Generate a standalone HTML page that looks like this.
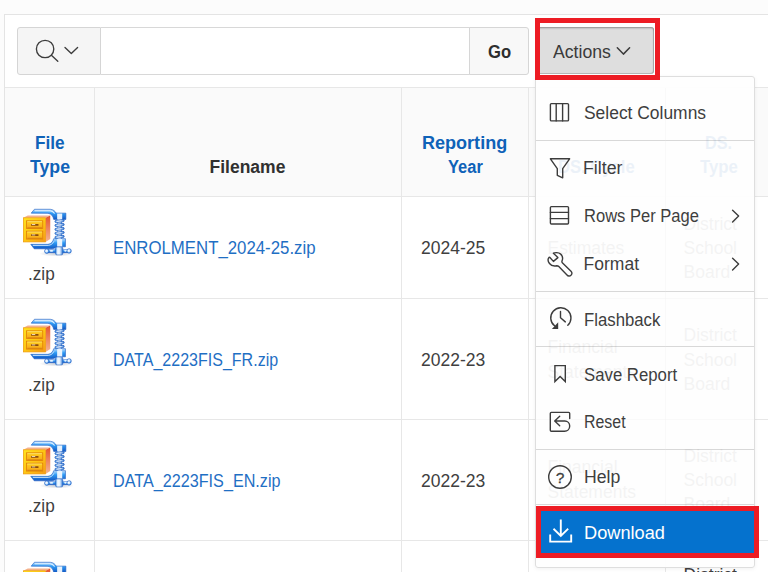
<!DOCTYPE html>
<html lang="en">
<head>
<meta charset="utf-8">
<title>Interactive Report - Actions - Download</title>
<style>
html,body{margin:0;padding:0;}
body{width:768px;height:572px;overflow:hidden;position:relative;background:#fcfcfc;font-family:"Liberation Sans",Arial,sans-serif;font-size:17.5px;color:#404040;}
.abs{position:absolute;}
.t{position:absolute;white-space:nowrap;line-height:20px;height:20px;transform-origin:0 50%;}
.b{font-weight:bold;}
.blue{color:#0f62b8;}
.link{color:#1f6fc4;}
.hl{position:absolute;background:#e7e7e7;height:1px;}
.vl{position:absolute;background:#e7e7e7;width:1px;}
#region{left:4px;top:14px;width:780px;height:600px;background:#fff;border:1px solid #e4e4e4;box-sizing:border-box;}
#thead{left:5px;top:87px;width:763px;height:110px;background:#fafafa;border-top:1px solid #e7e7e7;border-bottom:1px solid #e7e7e7;box-sizing:border-box;}
#sbtn{left:17px;top:27px;width:84px;height:48px;box-sizing:border-box;background:#f5f5f5;border:1px solid #d5d5d5;border-radius:3px 0 0 3px;}
#sinp{left:101px;top:27px;width:369px;height:48px;box-sizing:border-box;background:#fff;border:1px solid #d8d8d8;border-left:none;border-right:none;}
#go{left:469px;top:27px;width:60px;height:48px;box-sizing:border-box;background:#f8f8f8;border:1px solid #d6d6d6;border-radius:0 3px 3px 0;}
#act{left:537px;top:27px;width:117px;height:47px;box-sizing:border-box;background:#dedede;border-radius:3px;box-shadow:inset 0 1px 2px rgba(0,0,0,.38), inset -1px -1px 0 rgba(0,0,0,.16);}
.red{position:absolute;box-sizing:border-box;border:5px solid #ed1c24;}
#menu{left:535px;top:76px;width:220px;height:492px;box-sizing:border-box;background:rgba(254,254,254,.93);border:1px solid #dedede;border-radius:3px;box-shadow:0 1px 4px rgba(0,0,0,.06);}
.sep{position:absolute;left:536px;width:218px;height:1px;background:#d8d8d8;}
.mi{color:#3e3e3e;}
svg{position:absolute;overflow:visible;}
.ic{fill:none;stroke:#3c3c3c;stroke-width:1.5;stroke-linecap:round;stroke-linejoin:round;}
.gh{opacity:.075;}
.gl{opacity:.05;}
</style>
</head>
<body>
<div id="region" class="abs"></div>
<div id="thead" class="abs"></div>
<!-- toolbar -->
<div id="sbtn" class="abs"></div>
<div id="sinp" class="abs"></div>
<div id="go" class="abs"></div>
<div id="t_go" class="t b" style="transform:scaleX(0.9500);left:487.60px;top:41.7px;color:#2e2e2e;">Go</div>
<div id="act" class="abs"></div>
<div id="t_act" class="t" style="transform:scaleX(1.0088);left:553.40px;top:41.7px;color:#3a3a3a;">Actions</div>

<!-- search icon + chevrons -->
<svg class="ic" style="left:0;top:0" width="768" height="100" viewBox="0 0 768 100">
<circle cx="45.1" cy="49" r="8.7" style="stroke-width:1.35"/>
<path d="M51.4 55.2 L57.8 61.2" style="stroke-width:1.35"/>
<path d="M65 47.4 L71.3 53.5 L77.6 47.4" style="stroke-width:1.35"/>
<path d="M617.3 47.8 L623.4 54.1 L629.6 47.8" style="stroke:#3a3a3a"/>
</svg>
<!-- table grid -->
<div class="vl" style="left:94px;top:88px;height:484px;"></div>
<div class="vl" style="left:401px;top:88px;height:484px;"></div>
<div class="vl" style="left:528px;top:88px;height:484px;"></div>
<div class="vl" style="left:665px;top:88px;height:484px;"></div>
<div class="hl" style="left:5px;top:298px;width:763px;"></div>
<div class="hl" style="left:5px;top:419px;width:763px;"></div>
<div class="hl" style="left:5px;top:540px;width:763px;"></div>
<!-- ICONS-START -->
<svg style="left:18px;top:204px" width="58" height="58" viewBox="0 0 572 572">
<defs>
<linearGradient id="z1a" x1="0" y1="0" x2="1" y2="1"><stop offset="0" stop-color="#ffe21f"/><stop offset=".55" stop-color="#fdc413"/><stop offset="1" stop-color="#f59a1b"/></linearGradient>
<linearGradient id="z1b" x1="0" y1="0" x2="0" y2="1"><stop offset="0" stop-color="#e5532c"/><stop offset="1" stop-color="#f6b692"/></linearGradient>
<linearGradient id="z1c" x1="0" y1="0" x2="0" y2="1"><stop offset="0" stop-color="#bfe2ff"/><stop offset=".4" stop-color="#2f9bf5"/><stop offset="1" stop-color="#1258c4"/></linearGradient>
<linearGradient id="z1d" x1="0" y1="0" x2="1" y2="0"><stop offset="0" stop-color="#3b8fe6"/><stop offset=".3" stop-color="#f4faff"/><stop offset=".6" stop-color="#e2f1ff"/><stop offset="1" stop-color="#2a74d2"/></linearGradient>
<linearGradient id="z1e" x1="0" y1="0" x2="0" y2="1"><stop offset="0" stop-color="#ffd21c"/><stop offset="1" stop-color="#f7a41c"/></linearGradient>
<radialGradient id="z1f" cx=".4" cy=".4" r=".6"><stop offset="0" stop-color="#ffffff"/><stop offset=".5" stop-color="#cfe8ff"/><stop offset="1" stop-color="#2f86e6"/></radialGradient>
<radialGradient id="z1s" cx=".5" cy=".5" r=".5"><stop offset="0" stop-color="#7a8aa0" stop-opacity=".45"/><stop offset="1" stop-color="#7a8aa0" stop-opacity="0"/></radialGradient>
</defs>
<ellipse cx="380" cy="490" rx="170" ry="28" fill="url(#z1s)"/>
<!-- clamp arms -->
<path d="M130 90L162 52H318C352 54 366 74 378 90H472V152H352C346 120 330 96 296 92Z" fill="url(#z1c)" stroke="#1f5cc0" stroke-width="6" stroke-linejoin="round"/>
<path d="M170 66H316C338 68 350 80 358 92" fill="none" stroke="#e4f2ff" stroke-width="10" stroke-linecap="round"/>
<path d="M126 398H296C330 392 344 372 352 342H468V422H382C366 438 348 442 318 442H160Z" fill="url(#z1c)" stroke="#1f5cc0" stroke-width="6" stroke-linejoin="round"/>
<path d="M150 408H300C326 404 342 392 352 372" fill="none" stroke="#d8ecff" stroke-width="9" stroke-linecap="round"/>
<!-- screw -->
<rect x="386" y="150" width="48" height="195" fill="url(#z1d)"/>
<rect x="364" y="157" width="92" height="22" rx="11" fill="url(#z1d)" stroke="#1f5cc0" stroke-width="7" transform="rotate(-7 410 168)"/><rect x="364" y="196" width="92" height="22" rx="11" fill="url(#z1d)" stroke="#1f5cc0" stroke-width="7" transform="rotate(-7 410 207)"/><rect x="364" y="235" width="92" height="22" rx="11" fill="url(#z1d)" stroke="#1f5cc0" stroke-width="7" transform="rotate(-7 410 246)"/><rect x="364" y="274" width="92" height="22" rx="11" fill="url(#z1d)" stroke="#1f5cc0" stroke-width="7" transform="rotate(-7 410 285)"/><rect x="364" y="313" width="92" height="22" rx="11" fill="url(#z1d)" stroke="#1f5cc0" stroke-width="7" transform="rotate(-7 410 324)"/>
<rect x="386" y="94" width="50" height="56" fill="#f2f9ff" opacity=".95"/>
<rect x="386" y="346" width="50" height="74" fill="#f2f9ff" opacity=".95"/>
<!-- T handle -->
<rect x="280" y="450" width="232" height="30" rx="15" fill="url(#z1c)" stroke="#1f5cc0" stroke-width="5"/>
<circle cx="284" cy="465" r="22" fill="url(#z1f)" stroke="#1f5cc0" stroke-width="6"/>
<circle cx="504" cy="463" r="22" fill="url(#z1f)" stroke="#1f5cc0" stroke-width="6"/>
<rect x="370" y="424" width="72" height="78" rx="14" fill="url(#z1d)" stroke="#1f5cc0" stroke-width="5"/>
<ellipse cx="330" cy="462" rx="20" ry="9" fill="#eef7ff"/>
<ellipse cx="468" cy="462" rx="14" ry="8" fill="#eef7ff"/>
<!-- cabinet -->
<path d="M52 136L96 114H318L272 136Z" fill="#f4b18b"/>
<path d="M272 136L318 114V346L272 374Z" fill="url(#z1b)"/>
<rect x="53" y="136" width="219" height="238" fill="url(#z1a)" stroke="#ee9a0a" stroke-width="7"/>
<rect x="84" y="166" width="160" height="76" fill="url(#z1e)" stroke="#e07f0a" stroke-width="8"/>
<rect x="84" y="268" width="160" height="78" fill="url(#z1e)" stroke="#e07f0a" stroke-width="8"/>
<path d="M92 234H236M92 338H236" stroke="#b85a00" stroke-width="6" opacity=".7"/>
<path d="M92 174H236M92 276H236" stroke="#fff3a6" stroke-width="6" opacity=".9"/>
<rect x="128" y="197" width="74" height="17" rx="3" fill="#8a4a0c"/><rect x="136" y="199" width="34" height="8" fill="#fff6d8"/>
<rect x="128" y="299" width="74" height="17" rx="3" fill="#8a4a0c"/><rect x="136" y="301" width="34" height="8" fill="#fff6d8"/>
</svg>
<svg style="left:18px;top:314.3px" width="58" height="58" viewBox="0 0 572 572">
<defs>
<linearGradient id="z2a" x1="0" y1="0" x2="1" y2="1"><stop offset="0" stop-color="#ffe21f"/><stop offset=".55" stop-color="#fdc413"/><stop offset="1" stop-color="#f59a1b"/></linearGradient>
<linearGradient id="z2b" x1="0" y1="0" x2="0" y2="1"><stop offset="0" stop-color="#e5532c"/><stop offset="1" stop-color="#f6b692"/></linearGradient>
<linearGradient id="z2c" x1="0" y1="0" x2="0" y2="1"><stop offset="0" stop-color="#bfe2ff"/><stop offset=".4" stop-color="#2f9bf5"/><stop offset="1" stop-color="#1258c4"/></linearGradient>
<linearGradient id="z2d" x1="0" y1="0" x2="1" y2="0"><stop offset="0" stop-color="#3b8fe6"/><stop offset=".3" stop-color="#f4faff"/><stop offset=".6" stop-color="#e2f1ff"/><stop offset="1" stop-color="#2a74d2"/></linearGradient>
<linearGradient id="z2e" x1="0" y1="0" x2="0" y2="1"><stop offset="0" stop-color="#ffd21c"/><stop offset="1" stop-color="#f7a41c"/></linearGradient>
<radialGradient id="z2f" cx=".4" cy=".4" r=".6"><stop offset="0" stop-color="#ffffff"/><stop offset=".5" stop-color="#cfe8ff"/><stop offset="1" stop-color="#2f86e6"/></radialGradient>
<radialGradient id="z2s" cx=".5" cy=".5" r=".5"><stop offset="0" stop-color="#7a8aa0" stop-opacity=".45"/><stop offset="1" stop-color="#7a8aa0" stop-opacity="0"/></radialGradient>
</defs>
<ellipse cx="380" cy="490" rx="170" ry="28" fill="url(#z2s)"/>
<!-- clamp arms -->
<path d="M130 90L162 52H318C352 54 366 74 378 90H472V152H352C346 120 330 96 296 92Z" fill="url(#z2c)" stroke="#1f5cc0" stroke-width="6" stroke-linejoin="round"/>
<path d="M170 66H316C338 68 350 80 358 92" fill="none" stroke="#e4f2ff" stroke-width="10" stroke-linecap="round"/>
<path d="M126 398H296C330 392 344 372 352 342H468V422H382C366 438 348 442 318 442H160Z" fill="url(#z2c)" stroke="#1f5cc0" stroke-width="6" stroke-linejoin="round"/>
<path d="M150 408H300C326 404 342 392 352 372" fill="none" stroke="#d8ecff" stroke-width="9" stroke-linecap="round"/>
<!-- screw -->
<rect x="386" y="150" width="48" height="195" fill="url(#z2d)"/>
<rect x="364" y="157" width="92" height="22" rx="11" fill="url(#z2d)" stroke="#1f5cc0" stroke-width="7" transform="rotate(-7 410 168)"/><rect x="364" y="196" width="92" height="22" rx="11" fill="url(#z2d)" stroke="#1f5cc0" stroke-width="7" transform="rotate(-7 410 207)"/><rect x="364" y="235" width="92" height="22" rx="11" fill="url(#z2d)" stroke="#1f5cc0" stroke-width="7" transform="rotate(-7 410 246)"/><rect x="364" y="274" width="92" height="22" rx="11" fill="url(#z2d)" stroke="#1f5cc0" stroke-width="7" transform="rotate(-7 410 285)"/><rect x="364" y="313" width="92" height="22" rx="11" fill="url(#z2d)" stroke="#1f5cc0" stroke-width="7" transform="rotate(-7 410 324)"/>
<rect x="386" y="94" width="50" height="56" fill="#f2f9ff" opacity=".95"/>
<rect x="386" y="346" width="50" height="74" fill="#f2f9ff" opacity=".95"/>
<!-- T handle -->
<rect x="280" y="450" width="232" height="30" rx="15" fill="url(#z2c)" stroke="#1f5cc0" stroke-width="5"/>
<circle cx="284" cy="465" r="22" fill="url(#z2f)" stroke="#1f5cc0" stroke-width="6"/>
<circle cx="504" cy="463" r="22" fill="url(#z2f)" stroke="#1f5cc0" stroke-width="6"/>
<rect x="370" y="424" width="72" height="78" rx="14" fill="url(#z2d)" stroke="#1f5cc0" stroke-width="5"/>
<ellipse cx="330" cy="462" rx="20" ry="9" fill="#eef7ff"/>
<ellipse cx="468" cy="462" rx="14" ry="8" fill="#eef7ff"/>
<!-- cabinet -->
<path d="M52 136L96 114H318L272 136Z" fill="#f4b18b"/>
<path d="M272 136L318 114V346L272 374Z" fill="url(#z2b)"/>
<rect x="53" y="136" width="219" height="238" fill="url(#z2a)" stroke="#ee9a0a" stroke-width="7"/>
<rect x="84" y="166" width="160" height="76" fill="url(#z2e)" stroke="#e07f0a" stroke-width="8"/>
<rect x="84" y="268" width="160" height="78" fill="url(#z2e)" stroke="#e07f0a" stroke-width="8"/>
<path d="M92 234H236M92 338H236" stroke="#b85a00" stroke-width="6" opacity=".7"/>
<path d="M92 174H236M92 276H236" stroke="#fff3a6" stroke-width="6" opacity=".9"/>
<rect x="128" y="197" width="74" height="17" rx="3" fill="#8a4a0c"/><rect x="136" y="199" width="34" height="8" fill="#fff6d8"/>
<rect x="128" y="299" width="74" height="17" rx="3" fill="#8a4a0c"/><rect x="136" y="301" width="34" height="8" fill="#fff6d8"/>
</svg>
<svg style="left:18px;top:435.6px" width="58" height="58" viewBox="0 0 572 572">
<defs>
<linearGradient id="z3a" x1="0" y1="0" x2="1" y2="1"><stop offset="0" stop-color="#ffe21f"/><stop offset=".55" stop-color="#fdc413"/><stop offset="1" stop-color="#f59a1b"/></linearGradient>
<linearGradient id="z3b" x1="0" y1="0" x2="0" y2="1"><stop offset="0" stop-color="#e5532c"/><stop offset="1" stop-color="#f6b692"/></linearGradient>
<linearGradient id="z3c" x1="0" y1="0" x2="0" y2="1"><stop offset="0" stop-color="#bfe2ff"/><stop offset=".4" stop-color="#2f9bf5"/><stop offset="1" stop-color="#1258c4"/></linearGradient>
<linearGradient id="z3d" x1="0" y1="0" x2="1" y2="0"><stop offset="0" stop-color="#3b8fe6"/><stop offset=".3" stop-color="#f4faff"/><stop offset=".6" stop-color="#e2f1ff"/><stop offset="1" stop-color="#2a74d2"/></linearGradient>
<linearGradient id="z3e" x1="0" y1="0" x2="0" y2="1"><stop offset="0" stop-color="#ffd21c"/><stop offset="1" stop-color="#f7a41c"/></linearGradient>
<radialGradient id="z3f" cx=".4" cy=".4" r=".6"><stop offset="0" stop-color="#ffffff"/><stop offset=".5" stop-color="#cfe8ff"/><stop offset="1" stop-color="#2f86e6"/></radialGradient>
<radialGradient id="z3s" cx=".5" cy=".5" r=".5"><stop offset="0" stop-color="#7a8aa0" stop-opacity=".45"/><stop offset="1" stop-color="#7a8aa0" stop-opacity="0"/></radialGradient>
</defs>
<ellipse cx="380" cy="490" rx="170" ry="28" fill="url(#z3s)"/>
<!-- clamp arms -->
<path d="M130 90L162 52H318C352 54 366 74 378 90H472V152H352C346 120 330 96 296 92Z" fill="url(#z3c)" stroke="#1f5cc0" stroke-width="6" stroke-linejoin="round"/>
<path d="M170 66H316C338 68 350 80 358 92" fill="none" stroke="#e4f2ff" stroke-width="10" stroke-linecap="round"/>
<path d="M126 398H296C330 392 344 372 352 342H468V422H382C366 438 348 442 318 442H160Z" fill="url(#z3c)" stroke="#1f5cc0" stroke-width="6" stroke-linejoin="round"/>
<path d="M150 408H300C326 404 342 392 352 372" fill="none" stroke="#d8ecff" stroke-width="9" stroke-linecap="round"/>
<!-- screw -->
<rect x="386" y="150" width="48" height="195" fill="url(#z3d)"/>
<rect x="364" y="157" width="92" height="22" rx="11" fill="url(#z3d)" stroke="#1f5cc0" stroke-width="7" transform="rotate(-7 410 168)"/><rect x="364" y="196" width="92" height="22" rx="11" fill="url(#z3d)" stroke="#1f5cc0" stroke-width="7" transform="rotate(-7 410 207)"/><rect x="364" y="235" width="92" height="22" rx="11" fill="url(#z3d)" stroke="#1f5cc0" stroke-width="7" transform="rotate(-7 410 246)"/><rect x="364" y="274" width="92" height="22" rx="11" fill="url(#z3d)" stroke="#1f5cc0" stroke-width="7" transform="rotate(-7 410 285)"/><rect x="364" y="313" width="92" height="22" rx="11" fill="url(#z3d)" stroke="#1f5cc0" stroke-width="7" transform="rotate(-7 410 324)"/>
<rect x="386" y="94" width="50" height="56" fill="#f2f9ff" opacity=".95"/>
<rect x="386" y="346" width="50" height="74" fill="#f2f9ff" opacity=".95"/>
<!-- T handle -->
<rect x="280" y="450" width="232" height="30" rx="15" fill="url(#z3c)" stroke="#1f5cc0" stroke-width="5"/>
<circle cx="284" cy="465" r="22" fill="url(#z3f)" stroke="#1f5cc0" stroke-width="6"/>
<circle cx="504" cy="463" r="22" fill="url(#z3f)" stroke="#1f5cc0" stroke-width="6"/>
<rect x="370" y="424" width="72" height="78" rx="14" fill="url(#z3d)" stroke="#1f5cc0" stroke-width="5"/>
<ellipse cx="330" cy="462" rx="20" ry="9" fill="#eef7ff"/>
<ellipse cx="468" cy="462" rx="14" ry="8" fill="#eef7ff"/>
<!-- cabinet -->
<path d="M52 136L96 114H318L272 136Z" fill="#f4b18b"/>
<path d="M272 136L318 114V346L272 374Z" fill="url(#z3b)"/>
<rect x="53" y="136" width="219" height="238" fill="url(#z3a)" stroke="#ee9a0a" stroke-width="7"/>
<rect x="84" y="166" width="160" height="76" fill="url(#z3e)" stroke="#e07f0a" stroke-width="8"/>
<rect x="84" y="268" width="160" height="78" fill="url(#z3e)" stroke="#e07f0a" stroke-width="8"/>
<path d="M92 234H236M92 338H236" stroke="#b85a00" stroke-width="6" opacity=".7"/>
<path d="M92 174H236M92 276H236" stroke="#fff3a6" stroke-width="6" opacity=".9"/>
<rect x="128" y="197" width="74" height="17" rx="3" fill="#8a4a0c"/><rect x="136" y="199" width="34" height="8" fill="#fff6d8"/>
<rect x="128" y="299" width="74" height="17" rx="3" fill="#8a4a0c"/><rect x="136" y="301" width="34" height="8" fill="#fff6d8"/>
</svg>
<svg style="left:18px;top:557.2px" width="58" height="58" viewBox="0 0 572 572">
<defs>
<linearGradient id="z4a" x1="0" y1="0" x2="1" y2="1"><stop offset="0" stop-color="#ffe21f"/><stop offset=".55" stop-color="#fdc413"/><stop offset="1" stop-color="#f59a1b"/></linearGradient>
<linearGradient id="z4b" x1="0" y1="0" x2="0" y2="1"><stop offset="0" stop-color="#e5532c"/><stop offset="1" stop-color="#f6b692"/></linearGradient>
<linearGradient id="z4c" x1="0" y1="0" x2="0" y2="1"><stop offset="0" stop-color="#bfe2ff"/><stop offset=".4" stop-color="#2f9bf5"/><stop offset="1" stop-color="#1258c4"/></linearGradient>
<linearGradient id="z4d" x1="0" y1="0" x2="1" y2="0"><stop offset="0" stop-color="#3b8fe6"/><stop offset=".3" stop-color="#f4faff"/><stop offset=".6" stop-color="#e2f1ff"/><stop offset="1" stop-color="#2a74d2"/></linearGradient>
<linearGradient id="z4e" x1="0" y1="0" x2="0" y2="1"><stop offset="0" stop-color="#ffd21c"/><stop offset="1" stop-color="#f7a41c"/></linearGradient>
<radialGradient id="z4f" cx=".4" cy=".4" r=".6"><stop offset="0" stop-color="#ffffff"/><stop offset=".5" stop-color="#cfe8ff"/><stop offset="1" stop-color="#2f86e6"/></radialGradient>
<radialGradient id="z4s" cx=".5" cy=".5" r=".5"><stop offset="0" stop-color="#7a8aa0" stop-opacity=".45"/><stop offset="1" stop-color="#7a8aa0" stop-opacity="0"/></radialGradient>
</defs>
<ellipse cx="380" cy="490" rx="170" ry="28" fill="url(#z4s)"/>
<!-- clamp arms -->
<path d="M130 90L162 52H318C352 54 366 74 378 90H472V152H352C346 120 330 96 296 92Z" fill="url(#z4c)" stroke="#1f5cc0" stroke-width="6" stroke-linejoin="round"/>
<path d="M170 66H316C338 68 350 80 358 92" fill="none" stroke="#e4f2ff" stroke-width="10" stroke-linecap="round"/>
<path d="M126 398H296C330 392 344 372 352 342H468V422H382C366 438 348 442 318 442H160Z" fill="url(#z4c)" stroke="#1f5cc0" stroke-width="6" stroke-linejoin="round"/>
<path d="M150 408H300C326 404 342 392 352 372" fill="none" stroke="#d8ecff" stroke-width="9" stroke-linecap="round"/>
<!-- screw -->
<rect x="386" y="150" width="48" height="195" fill="url(#z4d)"/>
<rect x="364" y="157" width="92" height="22" rx="11" fill="url(#z4d)" stroke="#1f5cc0" stroke-width="7" transform="rotate(-7 410 168)"/><rect x="364" y="196" width="92" height="22" rx="11" fill="url(#z4d)" stroke="#1f5cc0" stroke-width="7" transform="rotate(-7 410 207)"/><rect x="364" y="235" width="92" height="22" rx="11" fill="url(#z4d)" stroke="#1f5cc0" stroke-width="7" transform="rotate(-7 410 246)"/><rect x="364" y="274" width="92" height="22" rx="11" fill="url(#z4d)" stroke="#1f5cc0" stroke-width="7" transform="rotate(-7 410 285)"/><rect x="364" y="313" width="92" height="22" rx="11" fill="url(#z4d)" stroke="#1f5cc0" stroke-width="7" transform="rotate(-7 410 324)"/>
<rect x="386" y="94" width="50" height="56" fill="#f2f9ff" opacity=".95"/>
<rect x="386" y="346" width="50" height="74" fill="#f2f9ff" opacity=".95"/>
<!-- T handle -->
<rect x="280" y="450" width="232" height="30" rx="15" fill="url(#z4c)" stroke="#1f5cc0" stroke-width="5"/>
<circle cx="284" cy="465" r="22" fill="url(#z4f)" stroke="#1f5cc0" stroke-width="6"/>
<circle cx="504" cy="463" r="22" fill="url(#z4f)" stroke="#1f5cc0" stroke-width="6"/>
<rect x="370" y="424" width="72" height="78" rx="14" fill="url(#z4d)" stroke="#1f5cc0" stroke-width="5"/>
<ellipse cx="330" cy="462" rx="20" ry="9" fill="#eef7ff"/>
<ellipse cx="468" cy="462" rx="14" ry="8" fill="#eef7ff"/>
<!-- cabinet -->
<path d="M52 136L96 114H318L272 136Z" fill="#f4b18b"/>
<path d="M272 136L318 114V346L272 374Z" fill="url(#z4b)"/>
<rect x="53" y="136" width="219" height="238" fill="url(#z4a)" stroke="#ee9a0a" stroke-width="7"/>
<rect x="84" y="166" width="160" height="76" fill="url(#z4e)" stroke="#e07f0a" stroke-width="8"/>
<rect x="84" y="268" width="160" height="78" fill="url(#z4e)" stroke="#e07f0a" stroke-width="8"/>
<path d="M92 234H236M92 338H236" stroke="#b85a00" stroke-width="6" opacity=".7"/>
<path d="M92 174H236M92 276H236" stroke="#fff3a6" stroke-width="6" opacity=".9"/>
<rect x="128" y="197" width="74" height="17" rx="3" fill="#8a4a0c"/><rect x="136" y="199" width="34" height="8" fill="#fff6d8"/>
<rect x="128" y="299" width="74" height="17" rx="3" fill="#8a4a0c"/><rect x="136" y="301" width="34" height="8" fill="#fff6d8"/>
</svg>
<!-- ICONS-END -->
<!-- header text -->
<div id="h_file" class="t b blue" style="transform:scaleX(0.9828);left:34.77px;top:132.7px;">File</div>
<div id="h_type" class="t b blue" style="transform:scaleX(1.0128);left:30.00px;top:156.5px;">Type</div>
<div id="h_fn" class="t b" style="left:209.50px;top:157px;color:#303030;">Filename</div>
<div id="h_rep" class="t b blue" style="transform:scaleX(1.0309);left:422.47px;top:132.7px;">Reporting</div>
<div id="h_year" class="t b blue" style="transform:scaleX(0.9405);left:447.60px;top:156.5px;">Year</div>
<!-- rows -->
<div id="r1_zip" class="t" style="transform:scaleX(0.9808);left:27.72px;top:264.4px;">.zip</div>
<div id="r1_fn" class="t link" style="transform:scaleX(0.9595);left:113.34px;top:237.7px;">ENROLMENT_2024-25.zip</div>
<div id="r1_yr" class="t" style="left:421.00px;top:237.7px;">2024-25</div>
<div id="r2_zip" class="t" style="transform:scaleX(0.9808);left:27.72px;top:375.2px;">.zip</div>
<div id="r2_fn" class="t link" style="transform:scaleX(0.9162);left:113.38px;top:349.6px;">DATA_2223FIS_FR.zip</div>
<div id="r2_yr" class="t" style="left:421.00px;top:349.6px;">2022-23</div>
<div id="r3_zip" class="t" style="transform:scaleX(0.9808);left:27.72px;top:496.2px;">.zip</div>
<div id="r3_fn" class="t link" style="transform:scaleX(0.9244);left:113.38px;top:470.5px;">DATA_2223FIS_EN.zip</div>
<div id="r3_yr" class="t" style="left:421.00px;top:470.5px;">2022-23</div>

<div class="t" style="left:683.5px;top:565px;">District</div>
<!-- actions menu -->
<div id="menu" class="abs"></div>
<div class="sep" style="top:140px;"></div>
<div class="sep" style="top:291px;"></div>
<div class="sep" style="top:346px;"></div>
<div class="sep" style="top:449px;"></div>
<div class="sep" style="top:504px;"></div>
<div class="hl" style="left:536px;top:298px;width:218px;opacity:.18;"></div>
<div class="hl" style="left:536px;top:419px;width:218px;opacity:.18;"></div>
<div class="vl" style="left:665px;top:88px;height:418px;opacity:.18;"></div>
<!-- table cell text showing faintly through the translucent menu -->
<div class="t b blue gh" style="left:558px;top:156.5px;transform:scaleX(.95);">DS. Cycle</div>
<div class="t b blue gh" style="left:705px;top:132.7px;transform:scaleX(.93);">DS.</div>
<div class="t b blue gh" style="left:699.5px;top:156.5px;transform:scaleX(.96);">Type</div>
<div class="t gl" style="left:547.5px;top:237.7px;">Estimates</div>
<div class="t gl" style="left:683.5px;top:213.9px;">District</div>
<div class="t gl" style="left:683.5px;top:237.9px;">School</div>
<div class="t gl" style="left:683.5px;top:261.9px;">Board</div>
<div class="t gl" style="left:547.5px;top:336.9px;">Financial</div>
<div class="t gl" style="left:547.5px;top:361.5px;">Statements</div>
<div class="t gl" style="left:683.5px;top:325.3px;">District</div>
<div class="t gl" style="left:683.5px;top:349.5px;">School</div>
<div class="t gl" style="left:683.5px;top:373.5px;">Board</div>
<div class="t gl" style="left:547.5px;top:457.4px;">Financial</div>
<div class="t gl" style="left:547.5px;top:482.2px;">Statements</div>
<div class="t gl" style="left:683.5px;top:446.2px;">District</div>
<div class="t gl" style="left:683.5px;top:470.4px;">School</div>
<div class="t gl" style="left:683.5px;top:494.4px;">Board</div>
<div class="abs" style="left:541px;top:511px;width:213px;height:42px;background:#0572ce;"></div>
<div id="m_sel" class="t mi" style="transform:scaleX(0.9959);left:583.50px;top:103.4px;">Select Columns</div>
<div id="m_fil" class="t mi" style="transform:scaleX(1.0132);left:583.49px;top:158.2px;">Filter</div>
<div id="m_row" class="t mi" style="transform:scaleX(0.9450);left:583.65px;top:206px;">Rows Per Page</div>
<div id="m_for" class="t mi" style="left:583.60px;top:254px;">Format</div>
<div id="m_fla" class="t mi" style="transform:scaleX(0.9570);left:584.14px;top:309.6px;">Flashback</div>
<div id="m_sav" class="t mi" style="transform:scaleX(0.9577);left:584.14px;top:364.7px;">Save Report</div>
<div id="m_res" class="t mi" style="transform:scaleX(0.9089);left:584.19px;top:412px;">Reset</div>
<div id="m_hel" class="t mi" style="transform:scaleX(1.0086);left:584.19px;top:467.3px;">Help</div>
<div id="m_dow" class="t mi" style="transform:scaleX(1.0395);left:584.16px;top:522.7px;color:#fff;">Download</div>
<svg class="ic" style="left:0;top:0;stroke-width:1.4" width="768" height="572" viewBox="0 0 768 572">
<!-- select columns -->
<rect x="550.4" y="103.6" width="18.1" height="17.3" rx="1"/>
<path d="M556.2 103.6V120.9M562.6 103.6V120.9"/>
<!-- filter -->
<path d="M550.4 158.8H569.6L562.7 168.6V177.8L557.3 175.3V168.6Z"/>
<!-- rows per page -->
<rect x="550.4" y="206.6" width="18.1" height="17.4" rx="1"/>
<path d="M550.4 212.4H568.5M550.4 218.6H568.5"/>
<!-- format (wrench) -->
<path d="M553.4 253.2C555 252.3 558.5 252.3 560.4 253.9C562.5 255.5 563 258.5 562 261C561.8 261.8 561.9 262.3 562.3 262.7L571 271.2C572.3 272.5 572.2 274.3 571 275.3C569.8 276.4 568 276.2 567 275L558.8 266.5C558.3 266 557.5 265.8 556.6 265.8C554 266.3 551 265.5 549.5 263.5C548 261.5 548 259 548.6 258C549 257.3 549.5 257.2 549.7 257.3L553.4 261.4L557.9 257.6Z"/>
<!-- submenu chevrons -->
<path d="M732.6 210.2L738.6 216L732.6 221.9M732.6 258.2L738.6 264L732.6 269.9"/>
<!-- flashback -->
<path d="M567.8 325.2A10.1 10.1 0 1 0 554.6 325.8"/>
<path d="M560.5 311.4V317.7L565.3 321.9"/>
<path d="M558.2 322.3V328.9H551.9Z" style="fill:#3c3c3c;stroke:none"/>
<!-- save report -->
<path d="M554.9 365.6H565.3V381.6L560.1 376.5L554.9 381.6Z" style="stroke-linejoin:miter"/>
<!-- reset -->
<path d="M569.7 418.5V413.4Q569.7 412.4 568.7 412.4H551.3Q550.3 412.4 550.3 413.4V430.2Q550.3 431.2 551.3 431.2H564.5C567.5 431.2 569.7 429 569.7 426C569.7 423 567.5 421 564.8 421H554.9M559.7 416.3L554.7 421L559.7 425.7"/>
<!-- help -->
<circle cx="560" cy="477" r="11.3"/>
<text x="560.1" y="482.9" text-anchor="middle" style="font:15.5px 'Liberation Sans',Arial,sans-serif;fill:#3c3c3c;stroke:#3c3c3c;stroke-width:.3">?</text>
<!-- download -->
<path d="M560.8 520.5V535.5M554.2 529.4L560.8 535.9L567.5 529.4M550.2 535.5V541.6H571.2V535.5" style="stroke:#fff;stroke-width:1.9;stroke-linecap:square;stroke-linejoin:miter"/>
</svg>
<!-- red annotation rectangles -->
<div class="red" style="left:535px;top:18px;width:125px;height:62px;"></div>
<div class="red" style="left:536px;top:506px;width:223px;height:52px;"></div>
</body>
</html>
